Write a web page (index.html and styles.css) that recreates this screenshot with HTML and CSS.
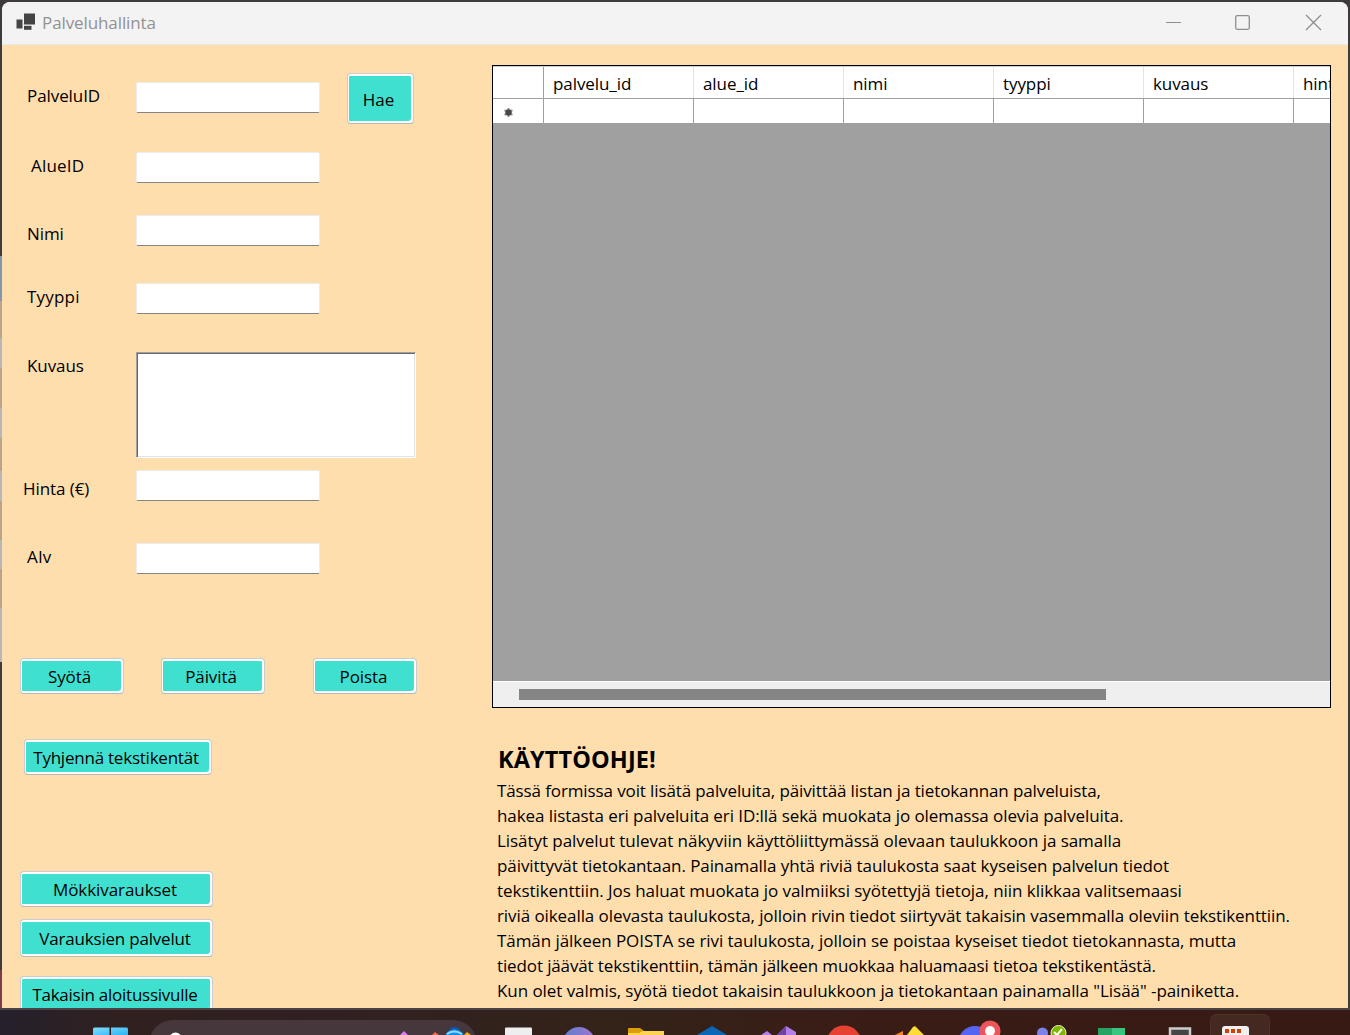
FILE: index.html
```html
<!DOCTYPE html>
<html lang="fi">
<head>
<meta charset="utf-8">
<title>Palveluhallinta</title>
<link rel="stylesheet" href="styles.css">
</head>
<body>
<div class="window">
  <header class="titlebar">
    <svg class="app-icon" width="20" height="18" viewBox="0 0 20 18"><g fill="#444"><rect x="8" y="0.5" width="11" height="11"/><rect x="0.5" y="6.5" width="6" height="9"/><rect x="8" y="12.8" width="7.5" height="4"/></g></svg>
    <span class="title">Palveluhallinta</span>
    <svg class="controls" width="158" height="18" viewBox="0 0 158 18" fill="none" stroke="#8e8e8e" stroke-width="1.3"><path d="M0 9.5H15" stroke-width="1"/><rect x="69.7" y="2.7" width="13.6" height="13.6" rx="1.5"/><path d="M140 2L155 17M155 2L140 17"/></svg>
  </header>
  <main class="content">
    <section class="left">
      <div class="form">
        <label class="l-id">PalveluID</label><input class="field"><button class="btn hae">Hae</button>
        <label class="l-area">AlueID</label><input class="field">
        <label class="l-name">Nimi</label><input class="field">
        <label class="l-type">Tyyppi</label><input class="field">
        <label class="l-desc">Kuvaus</label><textarea class="area"></textarea>
        <label class="l-price">Hinta (€)</label><input class="field">
        <label class="l-alv">Alv</label><input class="field">
      </div>
      <div class="actions"><button class="btn">Syötä</button><button class="btn">Päivitä</button><button class="btn">Poista</button></div>
      <button class="btn clear">Tyhjennä tekstikentät</button>
      <nav class="links"><button class="btn">Mökkivaraukset</button><button class="btn tall">Varauksien palvelut</button><button class="btn back">Takaisin aloitussivulle</button></nav>
    </section>
    <section class="right">
      <div class="grid">
        <div class="row head"><span></span><span>palvelu_id</span><span>alue_id</span><span>nimi</span><span>tyyppi</span><span>kuvaus</span><span>hinta</span></div>
        <div class="row entry"><span><svg width="9" height="9" viewBox="0 0 9 9"><path d="M4.5 0V9M.5 2.2L8.5 6.8M8.5 2.2L.5 6.8" stroke="#999" stroke-width="2"/><circle cx="4.5" cy="4.5" r="3.2" fill="#484848"/></svg></span><span></span><span></span><span></span><span></span><span></span><span></span></div>
        <div class="scroll"><div class="thumb"></div></div>
      </div>
      <h1>KÄYTTÖOHJE!</h1>
      <p class="guide">
        <span>Tässä formissa voit lisätä palveluita, päivittää listan ja tietokannan palveluista,</span>
        <span>hakea listasta eri palveluita eri ID:llä sekä muokata jo olemassa olevia palveluita.</span>
        <span>Lisätyt palvelut tulevat näkyviin käyttöliittymässä olevaan taulukkoon ja samalla</span>
        <span>päivittyvät tietokantaan. Painamalla yhtä riviä taulukosta saat kyseisen palvelun tiedot</span>
        <span>tekstikenttiin. Jos haluat muokata jo valmiiksi syötettyjä tietoja, niin klikkaa valitsemaasi</span>
        <span>riviä oikealla olevasta taulukosta, jolloin rivin tiedot siirtyvät takaisin vasemmalla oleviin tekstikenttiin.</span>
        <span>Tämän jälkeen POISTA se rivi taulukosta, jolloin se poistaa kyseiset tiedot tietokannasta, mutta</span>
        <span>tiedot jäävät tekstikenttiin, tämän jälkeen muokkaa haluamaasi tietoa tekstikentästä.</span>
        <span>Kun olet valmis, syötä tiedot takaisin taulukkoon ja tietokantaan painamalla "Lisää" -painiketta.</span>
      </p>
    </section>
  </main>
</div>
<footer class="taskbar">
  <svg width="1350" height="25" viewBox="0 1010 1350 25">
    <defs>
      <linearGradient id="win" x2="1" y2="1"><stop stop-color="#82dcff"/><stop offset="1" stop-color="#28b5f5"/></linearGradient>
      <linearGradient id="orb" x2="1"><stop stop-color="#5c80ce"/><stop offset="1" stop-color="#a274cf"/></linearGradient>
    </defs>
    <rect x="149" y="1020" width="328" height="48" rx="24" fill="#46373c"/>
    <path d="M93 1035v-6q0-1.500 1.500-1.500H109.500V1035zM111 1035v-7.500H126.500q1.500 0 1.500 1.500v6z" fill="url(#win)"/>
    <circle cx="175.500" cy="1039" r="6.500" fill="#fff"/>
    <path d="M400 1035l4-4 4 4z" fill="#df7bf5"/><path d="M432 1035l3-3 4 3z" fill="#f4694a"/><path d="M464 1035l3-3 4 3z" fill="#f5ad08"/>
    <circle cx="454.500" cy="1039" r="10" fill="#168be8"/><path d="M447 1034q7-5 15 0" fill="none" stroke="#8bdfff" stroke-width="2"/><path d="M450 1029q4-2 9 0" stroke="#1752a5" fill="none" stroke-width="2"/>
    <rect x="505" y="1027.500" width="27" height="12" rx="1" fill="#eee"/>
    <circle cx="579" cy="1043" r="16" fill="url(#orb)"/>
    <path d="M628 1035v-6q0-1 1-1h11l4 3h20v4z" fill="#dc9e04"/><path d="M628 1035v-2h11l4-2h21v4z" fill="#ffd34e"/>
    <path d="M697 1035l15-9 15 9z" fill="#0868b7"/>
    <path d="M761 1035l6-4 5 4zM777 1035l9-9 10 6v3z" fill="#b57dea"/><path d="M777 1035l9-9v9z" fill="#7042a4"/>
    <circle cx="844" cy="1043" r="17.500" fill="#e64133"/>
    <path d="M895 1035l8-4v4z" fill="#f48620"/><path d="M907 1035l6-8q2-2 4 1l7 7z" fill="#ffdc36"/>
    <circle cx="975" cy="1043" r="17" fill="#5664f3"/><circle cx="990" cy="1031" r="10.500" fill="#ed555a"/><circle cx="990" cy="1031" r="5" fill="#fff"/>
    <circle cx="1042.500" cy="1033" r="5.500" fill="#7983e9"/><circle cx="1058.500" cy="1033" r="7.500" fill="#80b800" stroke="#e8f5cd"/><path d="M1054 1032l3 3 5-6" stroke="#fff" fill="none" stroke-width="2"/>
    <path d="M1098 1028h14v7h-14z" fill="#25a363"/><path d="M1112 1028h13v7h-13z" fill="#35c780"/>
    <rect x="1170" y="1028.500" width="20" height="14" fill="#454545" stroke="#ccc" stroke-width="2.500"/>
    <rect x="1210.500" y="1014.500" width="59" height="50" rx="6" fill="#43291f" stroke="#4c3329"/>
    <path d="M1222 1035v-6q0-3 3-3h21q3 0 3 3v6z" fill="#f0f0f0"/><path d="M1225 1029h4v4h-4zM1231 1029h4v4h-4zM1237 1029h4v4h-4z" fill="#d84000"/>
  </svg>
</footer>
</body>
</html>
```
FILE: styles.css
```css
* { box-sizing: border-box; }
body {
  margin: 0;
  width: 1350px;
  height: 1035px;
  padding: 2px 2px 0;
  overflow: hidden;
  font-family: "Open Sans", "Noto Sans", sans-serif;
  font-size: 17px;
  line-height: 25px;
  letter-spacing: -0.08px;
  color: #000;
  background: linear-gradient(#3d3b3b 0 256px, #8495ae 256px 301px, #b9a58c 301px 338px, #b7b7b7 338px 368px, #b9a58c 368px 408px, #b7b7b7 408px 438px, #b9a58c 438px 471px, #b7b7b7 471px 501px, #b9a58c 501px 540px, #b7b7b7 540px 569px, #b9a58c 569px 608px, #b7b7b7 608px 662px, #3d3b3b 662px 970px, #7c3c4a 970px) 0 0 / 2px 100% no-repeat, #3d3b3b;
}
.window { height: 1006px; overflow: hidden; border-radius: 8px 8px 0 0; background: #ffdead; }
.titlebar { height: 43px; display: flex; background: #f3f3f3; color: #929292; border-bottom: 1px solid #ece8e2; }
.app-icon { margin: 11px 6px 0 14px; }
.title { padding-top: 8px; letter-spacing: -0.1px; }
.controls { margin: 11px 24px 0 auto; }
.content { height: 963px; display: flex; }
.left { width: 490px; padding-top: 37px; }
.form { height: 577px; display: grid; grid-template-columns: 134px 210px auto; grid-template-rows: 70px 63px 68px 69px 118px 73px auto; align-items: start; justify-content: start; }
label { grid-column: 1; padding: 1px 0 0 25px; white-space: nowrap; }
.l-area { padding-left: 29px; letter-spacing: 0.2px; }
.l-name { padding-top: 6px; }
.l-type { letter-spacing: 0.2px; }
.l-price { padding: 6px 0 0 21px; }
.l-alv { letter-spacing: 0.4px; }
.field { grid-column: 2; width: 184px; height: 31px; padding: 3px; background: #fff; border: 1px solid #ececec; border-bottom-color: #858585; border-radius: 2px; }
.area { grid-column: 2 / 4; width: 280px; height: 106px; resize: none; background: #fff; border: 1px solid; border-color: #a0a0a0 #fff #fff #a0a0a0; box-shadow: inset 1px 1px #696969, inset -1px -1px #e3e3e3; outline: 0; }
.btn { display: block; flex: none; width: 104px; height: 36px; padding: 0 5px 0 0; font: inherit; letter-spacing: inherit; color: #000; white-space: nowrap; background: #40e0d0; border: 1px solid #ccc; border-bottom-color: #b8b8b8; border-radius: 4px; box-shadow: inset 0 0 0 1px #fff, inset -1px 2px #fff, inset -2px -2px #fff; }
.hae { width: 67px; height: 51px; margin: -9px 0 0 1px; padding: 2px 4px 0 0; }
.actions { display: flex; padding-left: 18px; margin-top: -1px; }
.actions .btn:nth-child(2) { margin-left: 37px; padding-right: 4px; }
.actions .btn:nth-child(3) { margin-left: 48px; padding-right: 3px; }
.clear { width: 188px; margin: 45px 0 0 22px; padding-right: 4px; letter-spacing: -0.23px; }
.links { padding: 96px 0 0 18px; }
.links .btn { width: 193px; padding-right: 3px; }
.links .tall { height: 38px; margin-top: 12px; padding-bottom: 0; letter-spacing: -0.2px; }
.links .back { margin-top: 19px; letter-spacing: -0.25px; }
.right { width: 839px; padding-top: 20px; }
.grid { height: 643px; display: flex; flex-direction: column; overflow: hidden; background: #a0a0a0; border: 1px solid #000; }
.row { display: grid; grid-template-columns: 51px repeat(6, 150px); background: #fff; }
.head { height: 33px; border-top: 1px solid #ccc; border-bottom: 1px solid #a0a0a0; }
.head span { padding: 4px 0 0 9px; border-right: 1px solid #e3e3e3; }
.head span:first-child { border-color: #a0a0a0; }
.entry { height: 24px; }
.entry span { border-right: 1px solid #a0a0a0; }
.entry svg { display: block; margin: 9px 0 0 11px; }
.scroll { height: 26px; margin-top: auto; padding: 7px 0 0 26px; background: #efefef; border-top: 1px solid #fff; }
.thumb { width: 587px; height: 11px; background: #858585; }
h1 { margin: 36px 0 0 6px; font-size: 23.5px; line-height: 30px; letter-spacing: 0.1px; }
.guide { margin: 4px 0 0 5px; }
.guide span { display: block; white-space: nowrap; }
.guide span:nth-child(1) { letter-spacing: -0.115px; }
.guide span:nth-child(3), .guide span:nth-child(5) { letter-spacing: -0.05px; }
.guide span:nth-child(7), .guide span:nth-child(9) { letter-spacing: -0.06px; }
.guide span:nth-child(8) { letter-spacing: -0.125px; }
.taskbar { height: 27px; margin: 0 -2px; border-top: 2px solid #494345; background: linear-gradient(90deg, #25202d, #30211f 9%, #302023 22%, #332319 45%, #3a1c16 65%, #381a15); }
.taskbar svg { display: block; }
```
